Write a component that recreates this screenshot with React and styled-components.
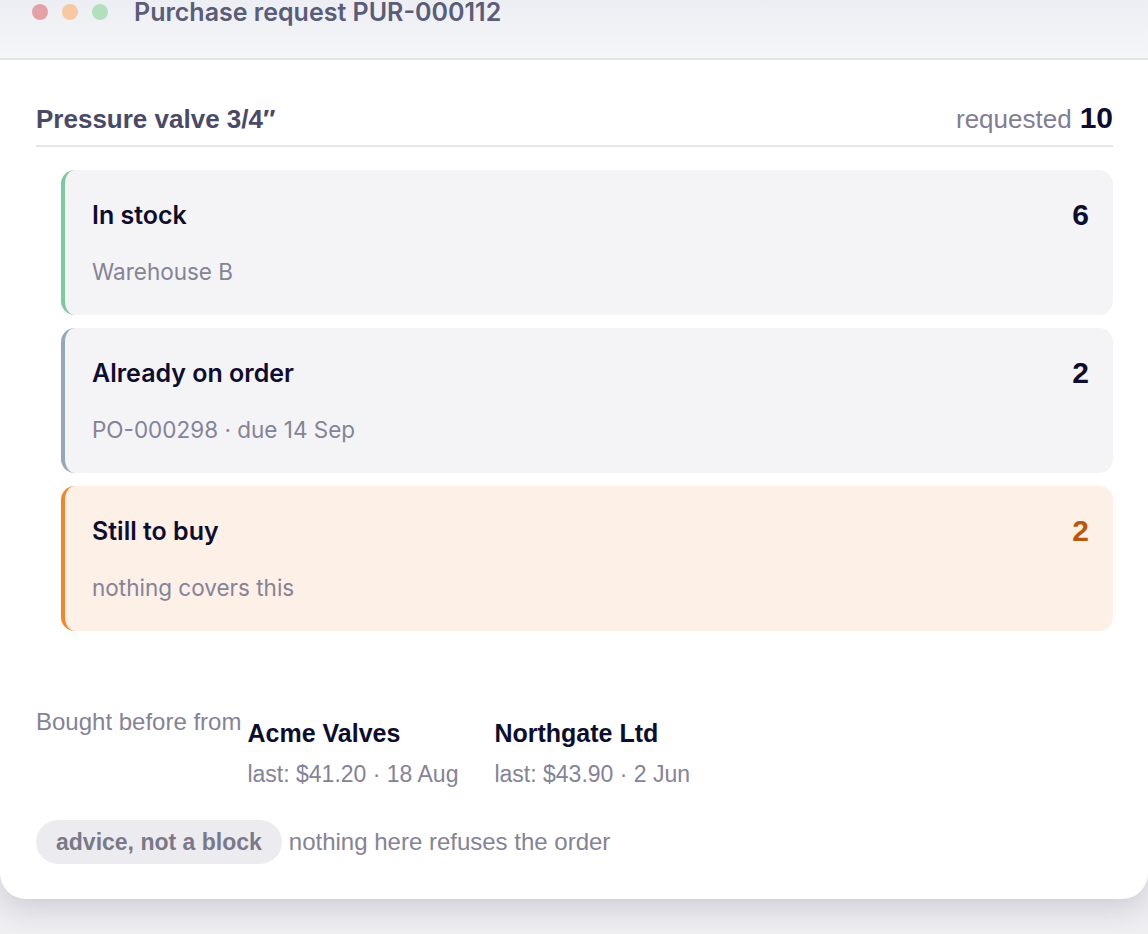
import React from "react";
import styled, { createGlobalStyle } from "styled-components";

const GlobalStyle = createGlobalStyle`
  html, body {
    margin: 0;
    padding: 0;
    background: #efeff2;
  }

  body {
    font-family: Inter, "Noto Sans", sans-serif;
  }
`;

const Page = styled.div`
  min-height: 100vh;
  background: #efeff2;
`;

const Window = styled.div`
  position: relative;
  width: 1148px;
  box-sizing: border-box;
  background: #ffffff;
  border-radius: 0 0 26px 26px;
  box-shadow: 0 10px 28px rgba(30, 30, 60, 0.16);
  overflow: hidden;
`;

const TitleBar = styled.div`
  display: flex;
  align-items: center;
  gap: 26px;

  height: 60px;
  box-sizing: border-box;
  padding: 0 32px 34px;

  background: linear-gradient(#eceef3, #f5f6f9);
  border-bottom: 2px solid #e3e4e9;
`;

const Dots = styled.div`
  display: flex;
  gap: 14px;
`;

const Dot = styled.span`
  width: 16px;
  height: 16px;
  border-radius: 50%;
  background: ${(p) => p.color};
`;

const Title = styled.div`
  font-size: 25px;
  font-weight: 600;
  line-height: 24px;
  color: #5a5c78;
`;

const Body = styled.div`
  padding: 41px 35px 35px 36px;
`;

const ItemHeader = styled.div`
  display: flex;
  justify-content: space-between;
  align-items: baseline;

  padding-bottom: 10px;
  border-bottom: 2px solid #e6e6ea;
  font-family: "Liberation Sans", Arial, sans-serif;
`;

const ItemName = styled.h2`
  margin: 0;
  font-size: 26px;
  font-weight: 700;
  line-height: 30px;
  color: #4a4966;
`;

const Requested = styled.div`
  font-size: 26px;
  color: #807e92;

  b {
    margin-left: 8px;
    font-size: 30px;
    color: #0e0d2e;
  }
`;

const Cards = styled.div`
  display: flex;
  flex-direction: column;
  gap: 13px;

  margin: 23px 0 0 25px;
`;

const Card = styled.div`
  display: flex;
  justify-content: space-between;

  height: 145px;
  box-sizing: border-box;
  padding: 30px 24px 0 27px;

  background: ${(p) => (p.$warn ? "#fdf0e7" : "#f4f4f7")};
  border-left: 4px solid ${(p) => p.$accent};
  border-radius: 14px;
`;

const CardText = styled.div`
  display: flex;
  flex-direction: column;
  gap: 28px;
`;

const CardTitle = styled.div`
  font-size: 25px;
  font-weight: 600;
  color: #0e0d2e;
  line-height: 30px;
`;

const CardSub = styled.div`
  font-size: 22.5px;
  color: #858396;
  line-height: 28px;
`;

const Count = styled.div`
  font-family: "Liberation Sans", Arial, sans-serif;
  font-size: 30px;
  font-weight: 700;
  line-height: 30px;
  color: ${(p) => (p.$warn ? "#b8570f" : "#0e0d2e")};
`;

const History = styled.div`
  display: flex;
  align-items: flex-start;
  gap: 6px;

  margin-top: 77px;
  font-family: "Liberation Sans", Arial, sans-serif;
`;

const HistoryLabel = styled.div`
  font-size: 24px;
  color: #858396;
  line-height: 28px;
`;

const Suppliers = styled.div`
  display: flex;
  gap: 36px;
  padding-top: 11px;
`;

const Supplier = styled.div`
  display: flex;
  flex-direction: column;
  gap: 13px;
`;

const SupplierName = styled.div`
  font-size: 25px;
  font-weight: 700;
  color: #0e0d2e;
  line-height: 28px;
`;

const SupplierLast = styled.div`
  font-size: 23px;
  color: #858396;
  line-height: 28px;
`;

const Note = styled.div`
  display: flex;
  align-items: center;
  gap: 7px;

  margin-top: 32px;
  font-family: "Liberation Sans", Arial, sans-serif;
  font-size: 24px;
  color: #858396;
`;

const Pill = styled.span`
  display: inline-flex;
  align-items: center;

  height: 44px;
  box-sizing: border-box;
  padding: 0 20px;

  background: #ececf0;
  border-radius: 22px;

  font-size: 23px;
  font-weight: 700;
  color: #7a7889;
`;

const coverage = [
  { title: "In stock", sub: "Warehouse B", count: 6, accent: "#80c8a0" },
  { title: "Already on order", sub: "PO-000298 · due 14 Sep", count: 2, accent: "#98a6ba" },
  { title: "Still to buy", sub: "nothing covers this", count: 2, accent: "#f2862a", warn: true },
];

const suppliers = [
  { name: "Acme Valves", last: "last: $41.20 · 18 Aug" },
  { name: "Northgate Ltd", last: "last: $43.90 · 2 Jun" },
];

const App = () => {
  return (
    <Page>
      <GlobalStyle />
      <Window>
        <TitleBar>
          <Dots>
            <Dot color="#e4a1a6" />
            <Dot color="#f6c9a3" />
            <Dot color="#b2e0bd" />
          </Dots>
          <Title>Purchase request PUR-000112</Title>
        </TitleBar>
        <Body>
          <ItemHeader>
            <ItemName>Pressure valve 3/4″</ItemName>
            <Requested>
              requested<b>10</b>
            </Requested>
          </ItemHeader>

          <Cards>
            {coverage.map((c) => (
              <Card key={c.title} $accent={c.accent} $warn={c.warn}>
                <CardText>
                  <CardTitle>{c.title}</CardTitle>
                  <CardSub>{c.sub}</CardSub>
                </CardText>
                <Count $warn={c.warn}>{c.count}</Count>
              </Card>
            ))}
          </Cards>

          <History>
            <HistoryLabel>Bought before from</HistoryLabel>
            <Suppliers>
              {suppliers.map((s) => (
                <Supplier key={s.name}>
                  <SupplierName>{s.name}</SupplierName>
                  <SupplierLast>{s.last}</SupplierLast>
                </Supplier>
              ))}
            </Suppliers>
          </History>

          <Note>
            <Pill>advice, not a block</Pill>
            nothing here refuses the order
          </Note>
        </Body>
      </Window>
    </Page>
  );
};

export default App;
